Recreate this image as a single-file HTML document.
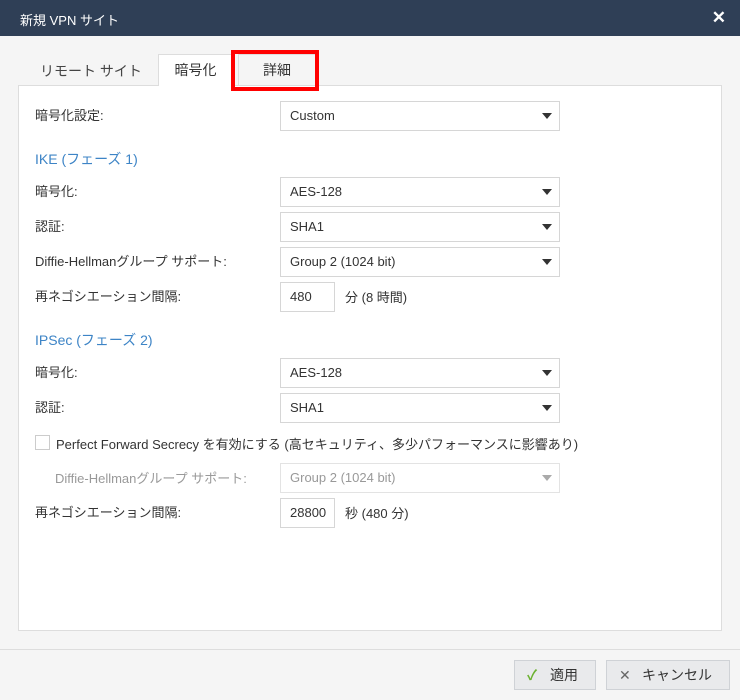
<!DOCTYPE html>
<html><head><meta charset="utf-8"><style>
*{box-sizing:border-box;margin:0;padding:0}
body{width:740px;height:700px;background:#f5f5f5;font-family:"Liberation Sans","Noto Sans CJK JP",sans-serif;font-size:13px;color:#333;position:relative;overflow:hidden}
.a{position:absolute}
.hdr{left:0;top:0;width:740px;height:36px;background:#2f3f56;color:#fff}
.lbl{left:35px;line-height:16px}
.sel{left:280px;width:280px;height:30px;border:1px solid #d6d6d6;background:#fff;padding-left:9px;line-height:28px}
.sel:after{content:"";position:absolute;right:7px;top:11px;border-left:5px solid transparent;border-right:5px solid transparent;border-top:6px solid #333}
.sel.dis{color:#999}
.sel.dis:after{border-top-color:#aaa}
.inp{left:280px;width:55px;height:30px;border:1px solid #d6d6d6;background:#fff;padding-left:9px;line-height:28px}
.sec{left:35px;color:#3d84c6;font-size:14px}
.btn{top:660px;height:30px;border:1px solid #cfd2d6;background:#e9eaec;line-height:28px;font-size:14px}
</style></head><body>
<div class="a hdr"><span class="a" style="left:20px;top:10px;font-size:13px">新規 VPN サイト</span><span class="a" style="right:14px;top:8px;font-size:17px;font-weight:bold">✕</span></div>
<span class="a" style="left:40px;top:61px;font-size:14px;color:#444">リモート サイト</span>
<div class="a" style="left:158px;top:54px;width:75px;height:32px;background:#fff;border:1px solid #ddd;border-bottom:none;text-align:center;line-height:30px;font-size:14px;z-index:2">暗号化</div>
<div class="a" style="left:18px;top:85px;width:704px;height:546px;background:#fff;border:1px solid #ddd"></div>
<div class="a" style="left:238px;top:54px;width:78px;height:32px;border:1px solid #ddd;border-bottom:none;text-align:center;line-height:30px;font-size:14px">詳細</div>
<div class="a" style="left:231px;top:50px;width:88px;height:41px;border:4px solid #f00;z-index:3"></div>

<span class="a lbl" style="top:108px">暗号化設定:</span><div class="a sel" style="top:101px">Custom</div>
<span class="a sec" style="top:149px">IKE (フェーズ 1)</span>
<span class="a lbl" style="top:184px">暗号化:</span><div class="a sel" style="top:177px">AES-128</div>
<span class="a lbl" style="top:219px">認証:</span><div class="a sel" style="top:212px">SHA1</div>
<span class="a lbl" style="top:254px">Diffie-Hellmanグループ サポート:</span><div class="a sel" style="top:247px">Group 2 (1024 bit)</div>
<span class="a lbl" style="top:289px">再ネゴシエーション間隔:</span><div class="a inp" style="top:282px">480</div><span class="a" style="left:345px;top:287px">分 (8 時間)</span>
<span class="a sec" style="top:330px">IPSec (フェーズ 2)</span>
<span class="a lbl" style="top:365px">暗号化:</span><div class="a sel" style="top:358px">AES-128</div>
<span class="a lbl" style="top:400px">認証:</span><div class="a sel" style="top:393px">SHA1</div>
<div class="a" style="left:35px;top:435px;width:15px;height:15px;border:1px solid #ccc;background:#fff"></div>
<span class="a" style="left:56px;top:434px">Perfect Forward Secrecy を有効にする (高セキュリティ、多少パフォーマンスに影響あり)</span>
<span class="a" style="left:55px;top:468px;color:#999">Diffie-Hellmanグループ サポート:</span><div class="a sel dis" style="top:463px;border-color:#e3e3e3">Group 2 (1024 bit)</div>
<span class="a lbl" style="top:505px">再ネゴシエーション間隔:</span><div class="a inp" style="top:498px">28800</div><span class="a" style="left:345px;top:503px">秒 (480 分)</span>

<div class="a" style="left:0;top:649px;width:740px;height:1px;background:#ddd"></div>
<div class="a btn" style="left:514px;width:82px"><span class="a" style="left:12px;top:0;color:#6bb130;font-weight:bold">✓</span><span class="a" style="left:35px;top:0">適用</span></div>
<div class="a btn" style="left:606px;width:124px"><span class="a" style="left:12px;top:0;color:#666">✕</span><span class="a" style="left:35px;top:0">キャンセル</span></div>
</body></html>
